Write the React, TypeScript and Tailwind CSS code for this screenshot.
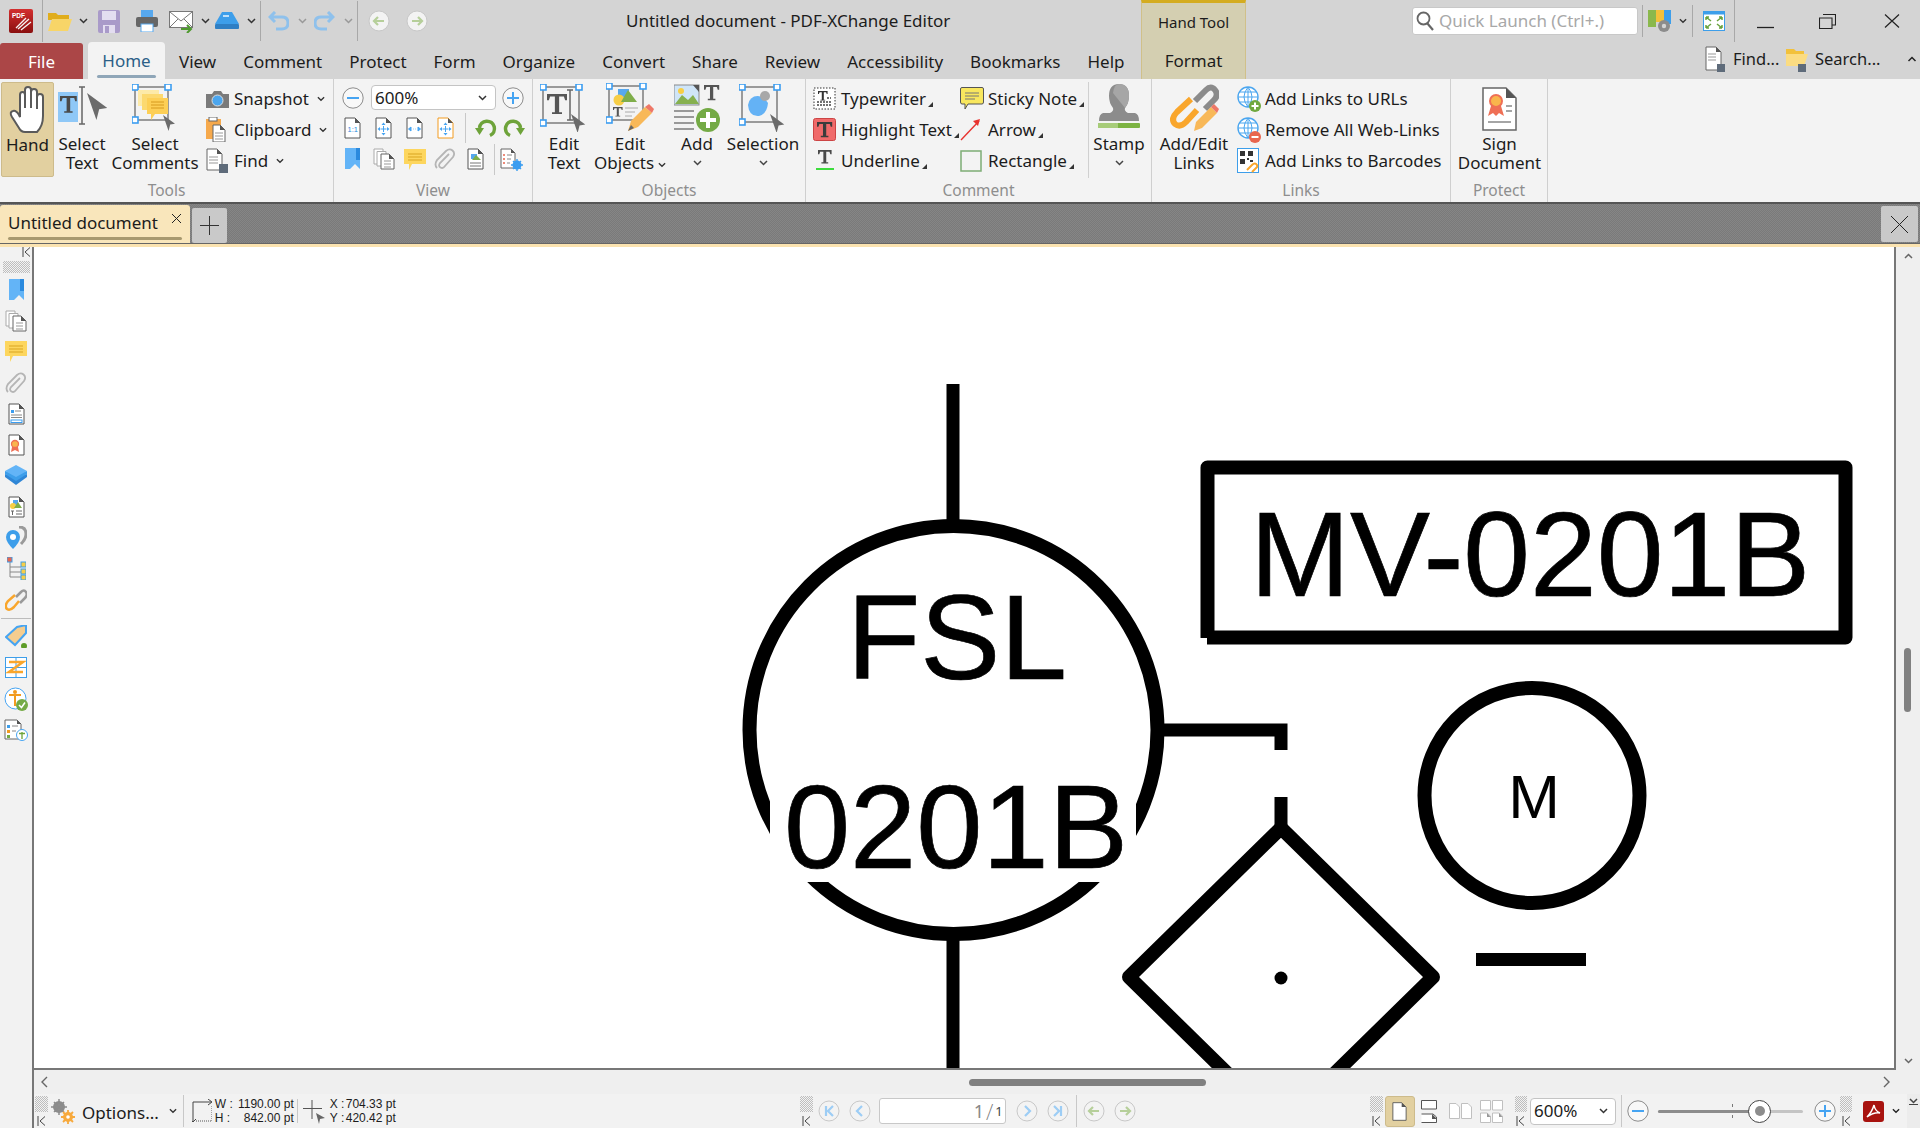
import type { ReactNode } from "react";

const gold = "#e2d0a0";

function Ic({ w, h, vb, children, className }: { w: number; h: number; vb?: string; children: ReactNode; className?: string }) {
  return (
    <svg width={w} height={h} viewBox={vb ?? `0 0 ${w} ${h}`} className={`shrink-0 ${className ?? ""}`}>
      {children}
    </svg>
  );
}

function Chev({ c = "#333", w = 9, up }: { c?: string; w?: number; up?: boolean }) {
  return (
    <svg width={w} height={6} viewBox="0 0 9 6" className="shrink-0">
      <polyline points={up ? "1,5 4.5,1.5 8,5" : "1,1 4.5,4.5 8,1"} fill="none" stroke={c} strokeWidth="1.5" />
    </svg>
  );
}

function Corner() {
  return (
    <svg width={5} height={5} className="ml-[2px] mt-[11px] shrink-0">
      <polygon points="5,0 5,5 0,5" fill="#333" />
    </svg>
  );
}

function Grip({ className }: { className?: string }) {
  return (
    <div className={`bg-[repeating-conic-gradient(#bdbdbd_0_25%,#f2f2f2_0_50%)] bg-[length:2px_2px] ${className ?? ""}`} />
  );
}

function Collapse({ className }: { className?: string }) {
  return (
    <svg width={9} height={10} className={`shrink-0 ${className ?? ""}`}>
      <path d="M1 0V10M8 0.5L3 5L8 9.5" fill="none" stroke="#444" strokeWidth="1" />
    </svg>
  );
}

function RoundBtn({ kind, size = 22 }: { kind: "minus" | "plus"; size?: number }) {
  return (
    <svg width={size} height={size} viewBox="0 0 22 22" className="shrink-0">
      <circle cx="11" cy="11" r="10.2" fill="#f8f8f8" stroke="#8c8c8c" />
      <path d={kind === "plus" ? "M5 11H17M11 5V17" : "M5 11H17"} stroke="#46a4f2" strokeWidth="2" />
    </svg>
  );
}

function NavBtn({ d, c }: { d: string; c: string }) {
  return (
    <svg width={22} height={22} viewBox="0 0 22 22" className="shrink-0">
      <circle cx="11" cy="11" r="10" fill="#f3f3f3" stroke="#c8c8c8" />
      <path d={d} fill="none" stroke={c} strokeWidth="2.2" />
    </svg>
  );
}

function PageIc({ w = 17, h = 22, children, stroke = "#555" }: { w?: number; h?: number; children?: ReactNode; stroke?: string }) {
  return (
    <svg width={w} height={h} viewBox="0 0 17 22" className="shrink-0">
      <path d="M1 1H11L16 6V21H1Z" fill="#fff" stroke={stroke} />
      <path d="M11 1L16 6H11Z" fill="#555" />
      {children}
    </svg>
  );
}

const FourArrows = () => (
  <g fill="#46a4f2" stroke="#46a4f2" strokeWidth="1">
    <path d="M8.500 9V15M5.500 12H11.500" fill="none" />
    <path d="M8.500 5.500L10.500 8H6.500ZM8.500 18.500L10.500 16H6.500ZM2.500 12L5 10V14ZM14.500 12L12 10V14Z" stroke="none" />
  </g>
);

const SideArrows = () => (
  <path d="M2.500 12L5 10V14ZM7 12H7.500M14.500 12L12 10V14ZM9.500 12H10" fill="#46a4f2" stroke="#46a4f2" />
);

function SelFrame({ s = 40 }: { s?: number }) {
  const b = 3;
  const e = s - 3;
  return (
    <>
      <rect x={b} y={b} width={e - b} height={e - b} fill="none" stroke="#9a9a9a" strokeWidth="2" />
      {[
        [b, b],
        [e, b],
        [b, e],
      ].map(([x, y]) => (
        <rect key={`${x}${y}`} x={x - 3} y={y - 3} width={6} height={6} fill="#fff" stroke="#3b9df0" strokeWidth="1.6" />
      ))}
    </>
  );
}

const Arrow = ({ x, y, s = 1 }: { x: number; y: number; s?: number }) => (
  <path transform={`translate(${x} ${y}) scale(${s})`} d="M0 0L15 11L9 12L7 20Z" fill="#6b6b6b" />
);

const TGlyph = ({ x, y, s = 1, c = "#555" }: { x: number; y: number; s?: number; c?: string }) => (
  <path
    transform={`translate(${x} ${y}) scale(${s})`}
    d="M0 0H16V5H14.5L13.5 2H9.7V14.5H12V16H4V14.5H6.3V2H2.5L1.5 5H0Z"
    fill={c}
  />
);

function Note({ w = 22, h = 21 }: { w?: number; h?: number }) {
  return (
    <svg width={w} height={h} viewBox="0 0 22 21" className="shrink-0">
      <path d="M0 0H22V15H8L5 21V15H0Z" fill="#fdd65e" />
      <path d="M4 5H18M4 8H18M4 11H18" stroke="#d9a520" />
    </svg>
  );
}

function Clip({ s = 22 }: { s?: number }) {
  return (
    <svg width={s} height={s} viewBox="0 0 22 22" className="shrink-0">
      <path d="M15 6L6 15Q4 18 6.5 19.5Q9 21 11 18L19 9Q21.5 5 18.5 2.5Q15.5 0 12 3L3 12Q0 17 3 20" fill="none" stroke="#b5b5b5" strokeWidth="1.8" />
    </svg>
  );
}

function Bookmark() {
  return (
    <svg width={15} height={22} viewBox="0 0 15 22" className="shrink-0">
      <path d="M0 0H15V21L10 16L5 21H0Z" fill="#63b4f7" />
      <path d="M11 0H15V12H11Z" fill="#2b8ade" />
    </svg>
  );
}

function Pages({ s = 22 }: { s?: number }) {
  return (
    <svg width={s} height={s} viewBox="0 0 22 22" className="shrink-0">
      <path d="M1 1H10V16H1Z" fill="#fff" stroke="#aaa" />
      <path d="M4 3.500H13V18H4Z" fill="#fff" stroke="#aaa" />
      <path d="M8 6H16L21 11V21H8Z" fill="#fff" stroke="#666" />
      <path d="M16 6L21 11H16Z" fill="#555" />
      <path d="M11 13H18M11 16H18M11 19H18" stroke="#999" />
    </svg>
  );
}

function Globe({ badge }: { badge: "plus" | "minus" }) {
  return (
    <svg width={24} height={26} viewBox="0 0 24 26" className="shrink-0">
      <circle cx="11" cy="11" r="10" fill="#fff" stroke="#4ba6ef" strokeWidth="1.4" />
      <path d="M1 11H21M3 6H19M3 16H19M11 1V21M11 1Q3 11 11 21M11 1Q19 11 11 21" fill="none" stroke="#4ba6ef" />
      <circle cx="18" cy="20" r="6" fill={badge === "plus" ? "#6fa83f" : "#e8664f"} />
      <path d={badge === "plus" ? "M14.500 20H21.500M18 16.500V23.500" : "M14.500 20H21.500"} stroke="#fff" strokeWidth="2" />
    </svg>
  );
}

const LargeIcons = {
  hand: (
    <Ic w={38} h={48}>
      <path
        d="M10 42L3 31Q0 26 4 25Q7 24 10 29L11 31V9Q11 6 13.500 6Q16 6 16 9V22V4Q16 1 19 1Q22 1 22 4V22V6Q22 3 25 3Q28 3 28 6V23V11Q28 8 31 8Q34 8 34 11V30Q34 40 28 46H16Q12 46 10 42Z"
        fill="#fff"
        stroke="#5a5a5a"
        strokeWidth="2"
      />
    </Ic>
  ),
  selectText: (
    <Ic w={49} h={44}>
      <rect x="0" y="6" width="20" height="30" fill="#8fc8f7" />
      <TGlyph x={2} y={10} s={1.05} c="#4a4a4a" />
      <path d="M21 1H27M24 1V38M21 38H27" fill="none" stroke="#666" strokeWidth="1.5" />
      <Arrow x={29} y={7} s={1.35} />
    </Ic>
  ),
  selectComments: (
    <Ic w={47} h={48}>
      <SelFrame s={39} />
      <path d="M6 6H27V22H6Z" fill="#fdeaa8" />
      <path d="M10 10H31V26H10Z" fill="#fcd970" />
      <path d="M15 14H36V30H23L19 36V30H15Z" fill="#fdcf55" />
      <path d="M19 18H32M19 21H32M19 24H32" stroke="#d69a1e" />
      <Arrow x={31} y={31} s={0.8} />
    </Ic>
  ),
  editText: (
    <Ic w={48} h={48}>
      <SelFrame s={42} />
      <TGlyph x={7} y={10} s={1.25} />
      <path d="M27 6H33M30 6V36M27 36H33" fill="none" stroke="#666" strokeWidth="1.5" />
      <Arrow x={31} y={30} s={0.95} />
    </Ic>
  ),
  editObjects: (
    <Ic w={48} h={50}>
      <SelFrame s={40} />
      <rect x="12" y="6" width="11" height="11" fill="#57a8ee" />
      <circle cx="13" cy="17" r="5.500" fill="#f7ce46" />
      <polygon points="22,7 31,19 15,19" fill="#7fae4a" />
      <TGlyph x={7} y={24} s={0.6} />
      <path d="M19 25H32M19 29H29M19 33H26" stroke="#aaa" />
      <path d="M22 48L25 38L39 24L46 30L32 44Z" fill="#f8b858" />
      <path d="M39 24L43 21L48 26L46 30Z" fill="#ee7767" />
      <path d="M22 48L25 42L28 45Z" fill="#666" />
    </Ic>
  ),
  add: (
    <Ic w={47} h={48}>
      <rect x="0" y="1" width="25" height="20" fill="#cfe5f8" stroke="#8a8a8a" />
      <circle cx="7" cy="7" r="3" fill="#f7ce46" />
      <path d="M1 20L8 11L14 16L19 11L25 20Z" fill="#86b04f" />
      <path d="M25 1V8L19 1Z" fill="#555" />
      <TGlyph x={30} y={1} s={0.95} />
      <path d="M0 27H20M0 33H20M0 39H20M0 45H20" stroke="#999" strokeWidth="2" />
      <circle cx="34" cy="36" r="12" fill="#74aa45" />
      <path d="M26 36H42M34 28V44" stroke="#fff" strokeWidth="4" />
    </Ic>
  ),
  selection: (
    <Ic w={48} h={48}>
      <SelFrame s={41} />
      <path d="M9 21A9.500 9.500 0 0 1 19 12Q26 13 29 19Q28 30 20 32Q10 33 9 21Z" fill="#64b2f5" />
      <circle cx="26" cy="12" r="5" fill="#a8a8a8" />
      <Arrow x={31} y={30} s={0.95} />
    </Ic>
  ),
  stamp: (
    <Ic w={44} h={50}>
      <path d="M22 1Q32 1 32 13Q32 20 28 25Q27 28 31 30H38Q42 31 42 38H2Q2 31 6 30H13Q17 28 16 25Q12 20 12 13Q12 1 22 1Z" fill="#8c8c8c" />
      <path d="M22 1Q32 1 32 13Q32 20 28 25L16 10Q17 1 22 1Z" fill="#a6a6a6" />
      <rect x="1" y="40" width="42" height="5" rx="1" fill="#7cb342" />
      <rect x="1" y="40" width="20" height="5" fill="#a7cc79" />
    </Ic>
  ),
  links: (
    <Ic w={50} h={50}>
      <path d="M26 18L37 7Q42 2 46 7Q50 12 45 17L36 26" fill="none" stroke="#8b8b8b" strokeWidth="6" />
      <path d="M22 16L8 29Q1 36 6 41Q11 45 17 39L28 27" fill="none" stroke="#f9a62c" strokeWidth="6" />
      <path d="M25 48L27 39L42 24L48 30L33 45Z" fill="#f8b858" />
      <path d="M42 24L45 21L50 26L48 30Z" fill="#ee7767" />
    </Ic>
  ),
  sign: (
    <Ic w={35} h={45}>
      <path d="M1 2H24L34 12V44H1Z" fill="#fff" stroke="#666" strokeWidth="1.500" />
      <path d="M24 2L34 12H24Z" fill="#555" />
      <circle cx="14" cy="15" r="6" fill="#f9b54c" stroke="#ef6f55" strokeWidth="2" />
      <path d="M9 20L6 30L11 27L14 30L17 27L22 30L19 20Z" fill="#ef6f55" />
      <path d="M24 20H30M24 25H30M6 36H29" stroke="#888" strokeWidth="1.500" />
    </Ic>
  ),
};

function Big({ w, icon, lines, chevron, className }: { w: number; icon: ReactNode; lines: string[]; chevron?: "below" | "inline"; className?: string }) {
  return (
    <div className={`flex h-[95px] shrink-0 flex-col items-center pt-[3px] ${className ?? ""}`} style={{ width: w }}>
      <div className="flex h-[52px] items-center justify-center">{icon}</div>
      {lines.map((l, i) => (
        <div key={l} className="flex items-center whitespace-nowrap leading-[19px]">
          {l}
          {chevron === "inline" && i === lines.length - 1 && (
            <span className="ml-[4px] mt-[4px]">
              <Chev w={8} />
            </span>
          )}
        </div>
      ))}
      {chevron === "below" && (
        <div className="flex h-[19px] items-center">
          <Chev w={9} c="#444" />
        </div>
      )}
    </div>
  );
}

function Small({ icon, label, w, chevron, corner }: { icon: ReactNode; label: string; w?: number; chevron?: boolean; corner?: boolean }) {
  return (
    <div className="flex h-[31px] items-center whitespace-nowrap" style={{ width: w }}>
      <span className="flex w-[28px] shrink-0 items-center">{icon}</span>
      <span>{label}</span>
      {chevron && (
        <span className="ml-[8px]">
          <Chev w={8} />
        </span>
      )}
      {corner && <Corner />}
    </div>
  );
}

function Group({ w, label, children }: { w: number; label: string; children: ReactNode }) {
  return (
    <div className="relative flex h-full shrink-0 flex-col border-r border-[#cfcfcf]" style={{ width: w }}>
      <div className="flex h-[102px] items-start">{children}</div>
      <div className="flex h-[20px] items-center justify-center text-[15.5px] leading-none text-[#8e8e8e]">{label}</div>
    </div>
  );
}

function QuickBar() {
  return (
    <div className="flex h-[42px] items-center">
      <span className="ml-[9px] w-[33px]">
        <Ic w={24} h={24}>
          <defs>
            <linearGradient id="lg" x1="0" y1="0" x2="0" y2="1">
              <stop offset="0" stopColor="#d32f2f" />
              <stop offset="1" stopColor="#8a0f0f" />
            </linearGradient>
          </defs>
          <rect width="24" height="24" rx="2" fill="url(#lg)" />
          <text x="3" y="8.500" fontSize="6.500" fontWeight="700" fill="#fff" fontFamily="Liberation Sans">PDF</text>
          <path d="M9 20L20 10M12 21L22 13M7 19L17 9" stroke="#f5f5f5" strokeWidth="1.300" />
        </Ic>
      </span>
      <div className="h-[42px] w-px bg-[#a8a8a8]" />
      <span className="ml-[5px] flex w-[50px] items-center">
        <Ic w={24} h={20}>
          <path d="M0 2H8L10 4H21V9H0Z" fill="#e0ad1c" />
          <path d="M0 20L4 8H24L20 20Z" fill="#f8d568" />
        </Ic>
        <span className="ml-[7px]">
          <Chev />
        </span>
      </span>
      <span className="w-[38px]">
        <Ic w={22} h={23}>
          <rect width="22" height="23" rx="2" fill="#a99ac9" />
          <rect x="4" y="1" width="14" height="9" fill="#e3ddf0" />
          <rect x="5" y="15" width="12" height="8" fill="#e3ddf0" />
          <rect x="7" y="16" width="4" height="7" fill="#a99ac9" />
        </Ic>
      </span>
      <span className="w-[33px]">
        <Ic w={22} h={22}>
          <rect x="5" y="0" width="12" height="7" fill="#57a8ee" />
          <rect x="0" y="7" width="22" height="10" rx="2" fill="#666" />
          <rect x="5" y="14" width="12" height="8" fill="#fff" stroke="#57a8ee" />
        </Ic>
      </span>
      <span className="flex w-[46px] items-center">
        <Ic w={25} h={24}>
          <rect x="0.500" y="2.500" width="23" height="16" fill="#fff" stroke="#777" />
          <path d="M1 3L12 12L23 3M1 18L9 10M23 18L15 10" fill="none" stroke="#777" />
          <path d="M12 20H21M18 16L22 20L18 24" fill="none" stroke="#4f9a2f" strokeWidth="2" />
        </Ic>
        <span className="ml-[7px]">
          <Chev />
        </span>
      </span>
      <span className="flex w-[45px] items-center">
        <Ic w={24} h={18}>
          <path d="M7 0H17L24 12H0Z" fill="#3d9eea" />
          <rect y="12" width="24" height="5" rx="1" fill="#2f7fc4" />
          <path d="M8 4H14" stroke="#bfe0fa" strokeWidth="2" />
        </Ic>
        <span className="ml-[8px]">
          <Chev />
        </span>
      </span>
      <div className="h-[40px] w-px bg-[#a8a8a8]" />
      <span className="ml-[7px] flex w-[46px] items-center">
        <Ic w={21} h={20}>
          <path d="M7 1L2 6L7 11M2 6H14Q20 6 20 12Q20 18 14 18H8" fill="none" stroke="#8fc1ec" strokeWidth="3" />
        </Ic>
        <span className="ml-[9px]">
          <Chev c="#999" />
        </span>
      </span>
      <span className="flex w-[43px] items-center">
        <Ic w={21} h={20}>
          <path d="M14 1L19 6L14 11M19 6H7Q1 6 1 12Q1 18 7 18H13" fill="none" stroke="#8fc1ec" strokeWidth="3" />
        </Ic>
        <span className="ml-[9px]">
          <Chev c="#999" />
        </span>
      </span>
      <div className="h-[40px] w-px bg-[#a8a8a8]" />
      <span className="ml-[10px] flex w-[38px]">
        <NavBtn d="M16 11H6M10 7L6 11L10 15" c="#b6cf9a" />
      </span>
      <NavBtn d="M6 11H16M12 7L16 11L12 15" c="#b6cf9a" />
      <div className="ml-[198px] whitespace-nowrap text-[17px]">Untitled document - PDF-XChange Editor</div>
    </div>
  );
}

function MenuTabs() {
  const tabs = ["View", "Comment", "Protect", "Form", "Organize", "Convert", "Share", "Review", "Accessibility", "Bookmarks", "Help"];
  return (
    <div className="flex h-[37px] items-end text-[17px]">
      <div className="flex h-[36px] w-[83px] items-center justify-center rounded-t-[3px] bg-[#ab4647] pt-[1px] text-white">File</div>
      <div className="relative z-10 ml-[5px] flex h-[37px] w-[77px] items-center justify-center rounded-t-[4px] bg-[#f3f3f3] text-[#2c5f87]">
        Home
        <div className="absolute bottom-[1px] left-[9px] h-[3px] w-[59px] rounded-sm bg-[#8fa6b8]" />
      </div>
      <div className="ml-[14px] flex h-[36px] items-center gap-[27px] pt-[1px]">
        {tabs.map((t) => (
          <span key={t}>{t}</span>
        ))}
      </div>
    </div>
  );
}

function WindowArea() {
  return (
    <div className="flex w-[674px] shrink-0 flex-col">
      <div className="flex h-[42px] items-center">
        <div className="ml-[166px] flex h-[28px] w-[226px] items-center rounded-[3px] border border-[#c8c8c8] bg-white pl-[3px] text-[17px] text-[#a8a8a8]">
          <Ic w={18} h={20} className="mr-[5px]">
            <circle cx="7.500" cy="7.500" r="6" fill="none" stroke="#666" strokeWidth="1.800" />
            <path d="M11 12L17 19" stroke="#666" strokeWidth="2.200" />
          </Ic>
          Quick Launch (Ctrl+.)
        </div>
        <div className="ml-[4px] h-[32px] w-px bg-[#a8a8a8]" />
        <span className="ml-[5px] flex w-[44px] items-center">
          <Ic w={25} h={25}>
            <rect x="0" y="1" width="8" height="17" fill="#8ab84c" />
            <rect x="8" y="1" width="8" height="12" fill="#f2c13b" />
            <rect x="16" y="1" width="7" height="14" fill="#3d9eea" />
            <circle cx="16" cy="17" r="6" fill="#8c8c8c" />
            <circle cx="16" cy="17" r="2.200" fill="#d4d4d4" />
          </Ic>
          <span className="ml-[6px]">
            <Chev w={8} />
          </span>
        </span>
        <div className="h-[32px] w-px bg-[#a8a8a8]" />
        <span className="ml-[10px] w-[31px]">
          <Ic w={22} h={20}>
            <rect x="0.500" y="0.500" width="21" height="19" fill="#fff" stroke="#3d9eea" />
            <rect x="0.500" y="0.500" width="21" height="3" fill="#3d9eea" />
            <path d="M3 6L8 10M3 6V9M3 6H6M19 6L14 10M19 6V9M19 6H16M3 17L8 13M3 17V14M3 17H6M19 17L14 13M19 17V14M19 17H16" fill="none" stroke="#6aa33f" strokeWidth="1.500" />
          </Ic>
        </span>
        <div className="h-[42px] w-px bg-[#a8a8a8]" />
        <span className="ml-[22px] mt-[10px] w-[62px]">
          <Ic w={17} h={6}>
            <path d="M0 4.500H17" stroke="#222" strokeWidth="1.300" />
          </Ic>
        </span>
        <span className="w-[65px]">
          <Ic w={17} h={15}>
            <path d="M4 0.500H16.500V11H13M0.500 4H13V14.500H0.500Z" fill="none" stroke="#222" strokeWidth="1.100" />
          </Ic>
        </span>
        <Ic w={16} h={14}>
          <path d="M1 0.500L15 13.500M15 0.500L1 13.500" stroke="#222" strokeWidth="1.200" />
        </Ic>
      </div>
      <div className="flex h-[37px] items-start pt-[4px] text-[16.5px]">
        <span className="ml-[459px] flex w-[81px] items-center">
          <Ic w={20} h={26} className="mr-[8px]">
            <path d="M1 1H11L16 6V24H1Z" fill="#fff" stroke="#666" />
            <path d="M11 1L16 6H11Z" fill="#555" />
            <path d="M3 8H11M3 11H11M3 14H11" stroke="#999" />
            <path d="M12 18H20V26H12Z" fill="#5e6b7a" />
          </Ic>
          <span className="leading-[26px]">Find...</span>
        </span>
        <span className="flex items-center">
          <Ic w={22} h={26} className="mr-[7px]">
            <path d="M0 3H8L10 5H18V18H0Z" fill="#f2c13b" />
            <path d="M0 8H22L18 20H0Z" fill="#fbdc82" />
            <path d="M12 18H20V26H12Z" fill="#5e6b7a" />
          </Ic>
          <span className="leading-[26px]">Search...</span>
        </span>
        <span className="ml-[25px] mt-[10px]">
          <Chev w={12} c="#222" up />
        </span>
      </div>
    </div>
  );
}

function Header() {
  return (
    <div className="flex h-[79px] bg-[#d4d4d4] text-[#1c1c1c]">
      <div className="flex flex-1 flex-col">
        <QuickBar />
        <MenuTabs />
      </div>
      <div className="flex w-[105px] shrink-0 flex-col border-x border-t-[3px] border-[#d0c089] border-t-[#d4ac1f] bg-[#d4cfb1]">
        <div className="flex h-[39px] items-center justify-center text-[15px]">Hand Tool</div>
        <div className="flex h-[36px] items-center justify-center pt-[1px] text-[17px]">Format</div>
      </div>
      <WindowArea />
    </div>
  );
}

function ToolsGroup() {
  return (
    <Group w={334} label="Tools">
      <div className="ml-[1px] mt-[3px] flex h-[95px] w-[53px] flex-col items-center rounded-[2px] border border-[#cdbb8b] bg-[#e2d0a0]">
        <div className="flex h-[52px] items-center pt-[2px]">{LargeIcons.hand}</div>
        <div className="leading-[19px]">Hand</div>
      </div>
      <Big w={58} icon={LargeIcons.selectText} lines={["Select", "Text"]} className="ml-[-1px]" />
      <Big w={90} icon={LargeIcons.selectComments} lines={["Select", "Comments"]} className="ml-[-1px]" />
      <div className="ml-[6px] pt-[4px]">
        <Small
          label="Snapshot"
          chevron
          icon={
            <Ic w={23} h={18}>
              <path d="M0 4H6L8 1H15L17 4H23V18H0Z" fill="#7a7a7a" />
              <circle cx="11.500" cy="10.500" r="5.500" fill="#4ba6ef" stroke="#ddd" />
            </Ic>
          }
        />
        <Small
          label="Clipboard"
          chevron
          icon={
            <Ic w={20} h={25}>
              <rect x="0" y="2" width="15" height="20" fill="#f6a94c" />
              <rect x="3" y="0" width="8" height="4" fill="#fff" stroke="#666" />
              <path d="M7 8H14L19 13V25H7Z" fill="#fff" stroke="#666" />
              <path d="M14 8L19 13H14Z" fill="#555" />
              <path d="M9 16H17M9 19H17M9 22H17" stroke="#999" />
            </Ic>
          }
        />
        <Small
          label="Find"
          chevron
          icon={
            <Ic w={23} h={25}>
              <path d="M1 1H11L16 6V22H1Z" fill="#fff" stroke="#666" />
              <path d="M11 1L16 6H11Z" fill="#555" />
              <path d="M3 9H12M3 12H12M3 15H12" stroke="#999" />
              <path d="M13 16H22V25H13Z" fill="#5e6b7a" />
            </Ic>
          }
        />
      </div>
    </Group>
  );
}

function ViewGroup() {
  return (
    <Group w={199} label="View">
      <div className="flex flex-col pl-[3px]">
        <div className="mt-[6px] flex h-[25px] items-center">
          <span className="ml-[5px]">
            <RoundBtn kind="minus" />
          </span>
          <div className="ml-[7px] flex h-[25px] w-[125px] items-center justify-between rounded-[4px] border border-[#c4c4c4] bg-white pl-[3px] pr-[7px]">
            600%
            <Chev w={11} />
          </div>
          <span className="ml-[6px]">
            <RoundBtn kind="plus" />
          </span>
        </div>
        <div className="mt-[7px] flex h-[22px] items-center">
          <span className="flex w-[31px] justify-center">
            <PageIc>
              <text x="3.500" y="15" fontSize="7.500" fill="#2b8ade" fontFamily="Liberation Sans">1:1</text>
            </PageIc>
          </span>
          <span className="flex w-[31px] justify-center">
            <PageIc>
              <FourArrows />
            </PageIc>
          </span>
          <span className="flex w-[31px] justify-center">
            <PageIc>
              <SideArrows />
            </PageIc>
          </span>
          <span className="flex w-[31px] justify-center">
            <PageIc stroke="#f29b20">
              <FourArrows />
            </PageIc>
          </span>
          <div className="mx-[4px] h-[30px] w-px bg-[#c8c8c8]" />
          <span className="flex w-[32px] justify-center">
            <Ic w={23} h={20}>
              <path d="M15 17.500A7.500 7.500 0 1 0 4.500 10" fill="none" stroke="#6ea33a" strokeWidth="3.500" />
              <path d="M0 10H9L4.500 17Z" fill="#6ea33a" />
            </Ic>
          </span>
          <Ic w={23} h={20}>
            <path d="M8 17.500A7.500 7.500 0 1 1 18.500 10" fill="none" stroke="#6ea33a" strokeWidth="3.500" />
            <path d="M23 10H14L18.500 17Z" fill="#6ea33a" />
          </Ic>
        </div>
        <div className="mt-[9px] flex h-[22px] items-center">
          <span className="flex w-[31px] justify-center">
            <Bookmark />
          </span>
          <span className="flex w-[31px] justify-center">
            <Pages />
          </span>
          <span className="flex w-[31px] justify-center">
            <Note />
          </span>
          <span className="flex w-[30px] justify-center">
            <Clip />
          </span>
          <span className="flex w-[31px] justify-center">
            <PageIc>
              <rect x="4" y="6" width="6" height="5" fill="#57a8ee" />
              <polygon points="9,7 14,12 5,12" fill="#7fae4a" />
              <path d="M3 15H14M3 18H14" stroke="#777" />
            </PageIc>
          </span>
          <div className="mx-[3px] h-[31px] w-px bg-[#c8c8c8]" />
          <span className="ml-[2px]">
            <Ic w={23} h={23}>
              <path d="M1 1H11L15 5V20H1Z" fill="#fff" stroke="#666" />
              <path d="M11 1L15 5H11Z" fill="#555" />
              <path d="M3 7H5M3 11H5M3 15H5" stroke="#e8664f" strokeWidth="1.400" />
              <path d="M7 7H12M7 11H11M7 15H10" stroke="#888" />
              <circle cx="17" cy="17" r="4.500" fill="#3b9df0" />
              <circle cx="17" cy="17" r="1.600" fill="#fff" />
              <path d="M17 11V23M11 17H23M13 13L21 21M21 13L13 21" stroke="#3b9df0" strokeWidth="1.400" />
            </Ic>
          </span>
        </div>
      </div>
    </Group>
  );
}

function ObjectsGroup() {
  return (
    <Group w={273} label="Objects">
      <span className="ml-[3px]">
        <Big w={56} icon={LargeIcons.editText} lines={["Edit", "Text"]} />
      </span>
      <span className="ml-[1px]">
        <Big w={74} icon={LargeIcons.editObjects} lines={["Edit", "Objects"]} chevron="inline" />
      </span>
      <Big w={52} icon={LargeIcons.add} lines={["Add"]} chevron="below" className="ml-[4px]" />
      <Big w={76} icon={LargeIcons.selection} lines={["Selection"]} chevron="below" className="ml-[2px]" />
    </Group>
  );
}

function CommentGroup() {
  return (
    <Group w={346} label="Comment">
      <div className="ml-[7px] w-[147px] pt-[4px]">
        <Small
          label="Typewriter"
          corner
          icon={
            <Ic w={23} h={23}>
              <rect x="1" y="1" width="21" height="21" fill="#fff" stroke="#333" strokeDasharray="1.500 1.500" />
              <TGlyph x={5} y={4} s={0.6} c="#333" />
              <path d="M14 11H18M4 15H19M4 18H19" stroke="#444" strokeWidth="1.500" strokeDasharray="2 1" />
            </Ic>
          }
        />
        <Small
          label="Highlight Text"
          corner
          icon={
            <Ic w={23} h={23}>
              <rect x="0.500" y="0.500" width="22" height="22" rx="2" fill="#f06a6a" stroke="#c44" />
              <TGlyph x={4} y={4} s={0.95} c="#3c3c3c" />
            </Ic>
          }
        />
        <Small
          label="Underline"
          corner
          icon={
            <Ic w={23} h={23}>
              <TGlyph x={5} y={1} s={0.85} c="#4a4a4a" />
              <path d="M3 20H21" stroke="#3ddc3d" strokeWidth="2" />
            </Ic>
          }
        />
      </div>
      <div className="w-[128px] pt-[4px]">
        <Small
          label="Sticky Note"
          corner
          icon={
            <Ic w={24} h={23}>
              <path d="M2 0.500H22Q23.500 0.500 23.500 2V15Q23.500 17 22 17H8L5 22V17H2Q0.500 17 0.500 15V2Q0.500 0.500 2 0.500Z" fill="#f9e75e" stroke="#555" />
              <path d="M5 6H19M5 9H19M5 12H15" stroke="#777" />
            </Ic>
          }
        />
        <Small
          label="Arrow"
          corner
          icon={
            <Ic w={21} h={23}>
              <path d="M1 22L19 3" stroke="#e8332f" strokeWidth="1.400" />
              <path d="M13 3L20 1L18 8Z" fill="#e8332f" />
            </Ic>
          }
        />
        <Small
          label="Rectangle"
          corner
          icon={
            <Ic w={22} h={22}>
              <rect x="1" y="1" width="20" height="20" fill="none" stroke="#7ead75" strokeWidth="1.500" />
            </Ic>
          }
        />
      </div>
      <div className="mt-[3px] h-[96px] w-px shrink-0 bg-[#d0d0d0]" />
      <Big w={60} icon={LargeIcons.stamp} lines={["Stamp"]} chevron="below" />
    </Group>
  );
}

function LinksGroup() {
  return (
    <Group w={299} label="Links">
      <span className="ml-[6px]">
        <Big w={72} icon={LargeIcons.links} lines={["Add/Edit", "Links"]} />
      </span>
      <div className="ml-[7px] pt-[4px]">
        <Small label="Add Links to URLs" icon={<Globe badge="plus" />} />
        <Small label="Remove All Web-Links" icon={<Globe badge="minus" />} />
        <Small
          label="Add Links to Barcodes"
          icon={
            <Ic w={22} h={25}>
              <rect x="0.500" y="0.500" width="21" height="24" fill="#fff" stroke="#3d9eea" />
              <path d="M3 3H8V8H3ZM11 3H16V8H11ZM3 11H8V16H3ZM10 10H12V12H10ZM13 12H16V14H13Z" fill="#333" />
              <path d="M10 22L15 17Q18 14 20 17Q21 19 19 20L15 24" fill="none" stroke="#f9a62c" strokeWidth="2" />
            </Ic>
          }
        />
      </div>
    </Group>
  );
}

function Ribbon() {
  return (
    <div className="flex h-[123px] items-stretch bg-[#f3f3f3] text-[17px] text-[#1c1c1c]">
      <ToolsGroup />
      <ViewGroup />
      <ObjectsGroup />
      <CommentGroup />
      <LinksGroup />
      <Group w={97} label="Protect">
        <Big w={97} icon={LargeIcons.sign} lines={["Sign", "Document"]} />
      </Group>
    </div>
  );
}

function TabBar() {
  return (
    <div className="border-t-2 border-[#555]">
      <div className="flex h-[39px] items-stretch bg-[#7f7f7f] bg-[repeating-conic-gradient(#7a7a7a_0_25%,#868686_0_50%)] bg-[length:2px_2px] pt-[1px]">
        <div className="relative flex w-[190px] items-center rounded-t-[3px] bg-[#f9e6bb] pb-[2px] pl-[8px] text-[17px] text-[#1c1c1c]">
          Untitled document
          <Ic w={11} h={11} className="absolute right-[8px] top-[8px]">
            <path d="M1 1L10 10M10 1L1 10" stroke="#222" strokeWidth="1" />
          </Ic>
          <div className="absolute bottom-[3px] left-[8px] h-[3px] w-[174px] rounded-sm bg-[#a8996f]" />
        </div>
        <div className="ml-[2px] mt-[3px] flex h-[35px] w-[35px] items-center justify-center rounded-[2px] bg-[#c9c9c9]">
          <Ic w={19} h={19}>
            <path d="M9.500 0V19M0 9.500H19" stroke="#333" />
          </Ic>
        </div>
        <div className="ml-auto mr-[2px] mt-[1px] flex h-[36px] w-[37px] items-center justify-center rounded-[2px] bg-[#c9c9c9]">
          <Ic w={19} h={19}>
            <path d="M1 1L18 18M18 1L1 18" stroke="#222" />
          </Ic>
        </div>
      </div>
      <div className="h-[4px] border-t border-[#666] bg-[#fbe3b0]" />
    </div>
  );
}

function Sidebar() {
  const items: ReactNode[] = [
    <Bookmark />,
    <Pages />,
    <Note />,
    <Clip />,
    <PageIc>
      <rect x="3" y="7" width="3" height="3" fill="#3b9df0" />
      <path d="M7 8H13M3 12H14M3 14.500H14" stroke="#888" />
      <rect x="3" y="17" width="11" height="2.500" fill="none" stroke="#3b9df0" />
    </PageIc>,
    <PageIc>
      <circle cx="7" cy="10" r="3.500" fill="#f9b54c" stroke="#ef6f55" strokeWidth="1.300" />
      <path d="M4 13L3 18L7 16L11 18L10 13Z" fill="#ef6f55" />
    </PageIc>,
    <Ic w={22} h={22}>
      <path d="M11 13L0 9V12L11 20L22 12V9Z" fill="#2f86d6" />
      <path d="M11 9L0 6V9L11 16L22 9V6Z" fill="#3d9eea" />
      <path d="M11 0L0 6L11 12L22 6Z" fill="#63b4f7" />
    </Ic>,
    <PageIc>
      <rect x="5" y="4" width="5" height="5" fill="#57a8ee" />
      <circle cx="5" cy="10" r="3" fill="#f7ce46" />
      <polygon points="10,6 14,12 6,12" fill="#7fae4a" />
      <path d="M8 15H14M8 18H14M3 15H6M4.500 15V19" stroke="#666" />
    </PageIc>,
    <Ic w={21} h={23}>
      <path d="M13 1Q20 1 20 8Q20 13 15 18" fill="none" stroke="#9a9a9a" strokeWidth="3" />
      <path d="M7 4A7 7 0 0 1 14 11Q14 16 7 23Q0 16 0 11A7 7 0 0 1 7 4Z" fill="#3d9eea" />
      <circle cx="7" cy="11" r="3" fill="#fff" />
    </Ic>,
    <Ic w={19} h={23}>
      <path d="M3 5V20M3 10H14M3 15H14M3 20H14" fill="none" stroke="#888" />
      <rect x="0" y="0" width="5" height="5" fill="#e8664f" stroke="#3d9eea" />
      <rect x="14" y="5" width="5" height="5" fill="#f7ce46" stroke="#3d9eea" />
      <rect x="14" y="12" width="5" height="5" fill="#f7ce46" stroke="#3d9eea" />
      <rect x="14" y="18" width="5" height="5" fill="#f7ce46" stroke="#3d9eea" />
    </Ic>,
    <Ic w={22} h={22}>
      <path d="M11 8L16 3Q19 0 21 3Q23 6 20 9L15 14" fill="none" stroke="#9a9a9a" strokeWidth="2.500" />
      <path d="M10 6L3 12Q-1 17 2 20Q5 22 9 18L14 12" fill="none" stroke="#f9a62c" strokeWidth="2.500" />
    </Ic>,
  ];
  const lower: ReactNode[] = [
    <Ic w={23} h={23}>
      <path d="M1 12L12 2L21 0V8L10 20Z" fill="#f5cd8f" stroke="#46a4f2" strokeWidth="2" />
      <circle cx="19" cy="21" r="3" fill="#5d9c28" />
    </Ic>,
    <Ic w={22} h={21}>
      <rect x="0.500" y="0.500" width="21" height="20" fill="#fff" stroke="#3d9eea" />
      <path d="M0.500 10.500H21.500M11 0.500V20.500" stroke="#3d9eea" />
      <path d="M4 5H18L4 15H18" fill="none" stroke="#f9a62c" strokeWidth="2.500" />
    </Ic>,
    <Ic w={24} h={24}>
      <circle cx="11.500" cy="11.500" r="10.500" fill="#fff" stroke="#46a4f2" />
      <circle cx="11" cy="5" r="2" fill="#f29b20" />
      <path d="M5 8H17M11 8V19" stroke="#f29b20" strokeWidth="2" />
      <circle cx="18" cy="18" r="6" fill="#74aa45" />
      <path d="M15 18L17.500 20.500L21 15.500" fill="none" stroke="#fff" strokeWidth="1.500" />
    </Ic>,
    <Ic w={24} h={22}>
      <path d="M1 1H13L17 5V20H1Z" fill="#fff" stroke="#666" />
      <path d="M13 1L17 5H13Z" fill="#555" />
      <rect x="3" y="6" width="3" height="3" fill="#3d9eea" />
      <rect x="3" y="11" width="3" height="3" fill="#f29b20" />
      <rect x="3" y="16" width="3" height="3" fill="#74aa45" />
      <path d="M8 7H14M8 12H12" stroke="#888" />
      <circle cx="18" cy="16" r="5.500" fill="#fff" stroke="#46a4f2" />
      <path d="M15 14.500H21M18 13V20" stroke="#6ea33a" strokeWidth="1.300" />
    </Ic>,
  ];
  return (
    <div className="flex w-[34px] shrink-0 flex-col border-r-2 border-[#777] bg-[#f2f2f2]">
      <div className="flex h-[10px] justify-end pr-[1px]">
        <Collapse />
      </div>
      <Grip className="ml-[3px] mt-[4px] h-[12px] w-[27px]" />
      <div className="mt-[1px] flex flex-col items-center">
        {items.map((node, i) => (
          <div key={i} className="flex h-[31px] items-center justify-center">
            {node}
          </div>
        ))}
      </div>
      <div className="mx-[1px] mt-[3px] h-px bg-[#bcbcbc]" />
      <div className="mt-[2px] flex flex-col items-center">
        {lower.map((node, i) => (
          <div key={i} className="flex h-[31px] items-center justify-center">
            {node}
          </div>
        ))}
      </div>
    </div>
  );
}

function Drawing() {
  const sw = 14;
  return (
    <svg width={1860} height={821} viewBox="34 247 1860 821" className="block" fontFamily="Liberation Sans">
      <path d="M953 384V524M953 936V1070" stroke="#000" strokeWidth={13} />
      <circle cx="953.500" cy="730" r="204" fill="#fff" stroke="#000" strokeWidth={sw} />
      <rect x="770" y="800" width="366" height="82" fill="#fff" />
      <path d="M1160 730H1281V750M1281 797V826" fill="none" stroke="#000" strokeWidth={13} />
      <path d="M1281 828L1433 977L1281 1126L1129 977Z" fill="#fff" stroke="#000" strokeWidth={sw} strokeLinejoin="round" />
      <circle cx="1281" cy="978" r="6.500" fill="#000" />
      <rect x="1207.500" y="467.500" width="638" height="170" fill="#fff" stroke="#000" strokeWidth={sw} strokeLinejoin="round" />
      <rect x="1200" y="638" width="7" height="7" fill="#fff" />
      <circle cx="1532" cy="795.500" r="107.500" fill="#fff" stroke="#000" strokeWidth={sw} />
      <rect x="1476" y="953" width="110" height="13" fill="#000" />
      <g stroke="#000" strokeWidth="0.700">
        <text x="1250" y="596" fontSize="120">MV-0201B</text>
        <text x="957" y="679" fontSize="120" textAnchor="middle">FSL</text>
        <text x="956" y="868" fontSize="119" textAnchor="middle">0201B</text>
      </g>
      <text x="1534" y="818" fontSize="62" textAnchor="middle">M</text>
    </svg>
  );
}

function VScroll() {
  return (
    <div className="flex w-[24px] shrink-0 flex-col items-center bg-[#efefef] pt-[6px]">
      <Chev w={11} c="#666" up />
      <div className="ml-[-1px] mt-[389px] h-[64px] w-[7px] rounded-full bg-[#808080]" />
      <div className="mt-[346px]">
        <Chev w={11} c="#666" />
      </div>
    </div>
  );
}

function HScroll() {
  return (
    <div className="flex h-[24px] items-center bg-[#efefef] pl-[7px]">
      <svg width={7} height={12} className="shrink-0">
        <polyline points="6,1 1,6 6,11" fill="none" stroke="#666" strokeWidth="1.400" />
      </svg>
      <div className="ml-[921px] h-[7px] w-[237px] rounded-full bg-[#808080]" />
      <svg width={7} height={12} className="ml-[677px] shrink-0">
        <polyline points="1,1 6,6 1,11" fill="none" stroke="#666" strokeWidth="1.400" />
      </svg>
    </div>
  );
}

function StatusBar() {
  return (
    <div className="flex h-[34px] items-center bg-[#f2f2f2] text-[#1c1c1c]">
      <div className="flex w-[14px] shrink-0 flex-col items-center">
        <Grip className="mb-[4px] h-[16px] w-[13px]" />
        <Collapse />
      </div>
      <span className="ml-[3px]">
        <Ic w={24} h={25}>
          <circle cx="8" cy="8" r="6" fill="#8c8c8c" />
          <circle cx="8" cy="8" r="2.200" fill="#f2f2f2" />
          <path d="M8 0V16M0 8H16M3 3L13 13M13 3L3 13" stroke="#8c8c8c" strokeWidth="1.500" />
          <path d="M17 11V25M10 18H24M12 13L22 23M22 13L12 23" stroke="#f7a93c" strokeWidth="1.800" />
          <circle cx="17" cy="18" r="5" fill="#f7a93c" />
          <circle cx="17" cy="18" r="1.800" fill="#fff" />
        </Ic>
      </span>
      <span className="ml-[7px] pt-[3px] text-[17px]">Options...</span>
      <span className="ml-[10px]">
        <Chev w={8} />
      </span>
      <div className="ml-[6px] h-[32px] w-px bg-[#c8c8c8]" />
      <span className="ml-[8px]">
        <Ic w={20} h={24}>
          <path d="M1 23V3H19M16 0L20 3L16 6M1 23L-2 20M1 23L4 20" fill="none" stroke="#444" />
          <path d="M4 22H20V6" fill="none" stroke="#555" strokeDasharray="1 1" />
        </Ic>
      </span>
      <div className="ml-[3px] grid w-[81px] grid-cols-[19px_1fr] font-['Liberation_Sans',sans-serif] text-[12px] leading-[14px]">
        <span>W :</span>
        <span className="text-right">1190.00 pt</span>
        <span>H :</span>
        <span className="text-right">842.00 pt</span>
      </div>
      <div className="ml-[3px] h-[24px] w-px bg-[#c8c8c8]" />
      <span className="ml-[5px]">
        <Ic w={22} h={25}>
          <path d="M9 1V20M0 9.500H19" stroke="#555" />
          <path d="M13 14L22 19L17 20L16 25Z" fill="#666" />
        </Ic>
      </span>
      <div className="ml-[5px] grid w-[74px] grid-cols-[16px_1fr] font-['Liberation_Sans',sans-serif] text-[12px] leading-[14px]">
        <span>X :</span>
        <span>704.33 pt</span>
        <span>Y :</span>
        <span>420.42 pt</span>
      </div>

      <div className="ml-[398px] flex w-[14px] shrink-0 flex-col items-center">
        <Grip className="mb-[4px] h-[16px] w-[13px]" />
        <Collapse />
      </div>
      <span className="ml-[4px]">
        <NavBtn d="M8 6V16M15 6L10 11L15 16" c="#9dcdf5" />
      </span>
      <span className="ml-[9px]">
        <NavBtn d="M13 6L8 11L13 16" c="#9dcdf5" />
      </span>
      <div className="ml-[8px] flex h-[26px] w-[130px] items-center justify-end rounded-[3px] border border-[#c8c8c8] bg-white pr-[2px] text-[#888]">
        <span className="text-[18px] leading-none">1</span>
        <span className="mx-[2px] text-[22px] font-extralight leading-none text-[#777]">/</span>
        <span className="text-[13px] leading-none text-[#444]">1</span>
      </div>
      <span className="ml-[10px]">
        <NavBtn d="M9 6L14 11L9 16" c="#9dcdf5" />
      </span>
      <span className="ml-[9px]">
        <NavBtn d="M7 6L12 11L7 16M14 6V16" c="#9dcdf5" />
      </span>
      <div className="ml-[7px] h-[32px] w-px bg-[#c8c8c8]" />
      <span className="ml-[6px]">
        <NavBtn d="M16 11H6M10 7L6 11L10 15" c="#b6cf9a" />
      </span>
      <span className="ml-[9px]">
        <NavBtn d="M6 11H16M12 7L16 11L12 15" c="#b6cf9a" />
      </span>

      <div className="ml-[234px] flex w-[14px] shrink-0 flex-col items-center">
        <Grip className="mb-[4px] h-[16px] w-[13px]" />
        <Collapse />
      </div>
      <div className="ml-[1px] flex h-[31px] w-[31px] items-center justify-center rounded-[3px] border border-[#cdbb8b]" style={{ background: gold }}>
        <PageIc w={15} h={21} />
      </div>
      <span className="ml-[6px]">
        <Ic w={16} h={23}>
          <path d="M0.500 0.500H15.500V9H0.500ZM0.500 14H12L15.500 17V22.500H0.500" fill="#fff" stroke="#555" />
          <path d="M11 14L16 19H11Z" fill="#555" />
        </Ic>
      </span>
      <span className="ml-[12px]">
        <Ic w={23} h={16}>
          <path d="M0.500 0.500H7L10.500 4V15.500H0.500ZM12.500 0.500H19L22.500 4V15.500H12.500Z" fill="#fff" stroke="#c0c0c0" />
        </Ic>
      </span>
      <span className="ml-[8px]">
        <Ic w={23} h={23}>
          <path d="M0.500 0.500H10.500V10H0.500ZM12.500 0.500H22.500V10H12.500ZM0.500 13H7L10.500 16V22.500H0.500ZM12.500 13H19L22.500 16V22.500H12.500Z" fill="#fff" stroke="#c0c0c0" />
          <path d="M7 13L10.500 17H7ZM19 13L22.500 17H19Z" fill="#999" />
        </Ic>
      </span>
      <div className="ml-[11px] flex w-[14px] shrink-0 flex-col items-center">
        <Grip className="mb-[4px] h-[16px] w-[12px]" />
        <Collapse />
      </div>
      <div className="ml-[2px] flex h-[27px] w-[88px] items-center justify-between rounded-[4px] border border-[#c4c4c4] bg-white pl-[3px] pr-[6px] text-[17px]">
        600%
        <Chev w={11} />
      </div>
      <div className="ml-[5px] h-[32px] w-px bg-[#c8c8c8]" />
      <span className="ml-[5px]">
        <RoundBtn kind="minus" />
      </span>
      <div className="relative ml-[9px] h-[3px] w-[149px] rounded-full bg-[#c4c4c4]">
        <div className="h-full w-[101px] rounded-full bg-[#8c8c8c]" />
        <div className="absolute left-[74px] top-[-6px] h-[14px] w-px bg-[repeating-linear-gradient(#777_0_3px,transparent_3px_11px)]" />
        <div className="absolute left-[90px] top-[-10px] flex h-[23px] w-[23px] items-center justify-center rounded-full border border-[#444] bg-white">
          <div className="h-[10px] w-[10px] rounded-full bg-[#8c8c8c]" />
        </div>
      </div>
      <span className="ml-[11px]">
        <RoundBtn kind="plus" />
      </span>
      <div className="ml-[3px] flex w-[14px] shrink-0 flex-col items-center">
        <Grip className="mb-[4px] h-[16px] w-[12px]" />
        <Collapse />
      </div>
      <span className="ml-[10px]">
        <Ic w={21} h={21}>
          <rect width="21" height="21" rx="3" fill="#a8130f" />
          <path d="M4 16Q9 11 11 4Q12 10 17 12Q11 11 4 16Z" fill="none" stroke="#fff" strokeWidth="1.500" />
        </Ic>
      </span>
      <span className="ml-[8px]">
        <Chev w={8} c="#222" />
      </span>
      <div className="ml-[7px] flex h-full w-[13px] flex-col items-center bg-[#ececec] pt-[4px]">
        <Chev w={9} c="#444" />
        <div className="h-px w-[9px] bg-[#444]" />
      </div>
    </div>
  );
}

export default function App() {
  return (
    <div className="flex h-[1128px] w-[1920px] flex-col overflow-hidden bg-[#f2f2f2] font-['Noto_Sans',sans-serif] text-[17px]">
      <Header />
      <Ribbon />
      <TabBar />
      <div className="flex min-h-0 flex-1">
        <Sidebar />
        <div className="flex min-w-0 flex-1 flex-col">
          <div className="flex h-[823px] shrink-0">
            <div className="min-w-0 flex-1 border-b-2 border-r-2 border-[#777] bg-white">
              <Drawing />
            </div>
            <VScroll />
          </div>
          <HScroll />
          <StatusBar />
        </div>
      </div>
    </div>
  );
}
